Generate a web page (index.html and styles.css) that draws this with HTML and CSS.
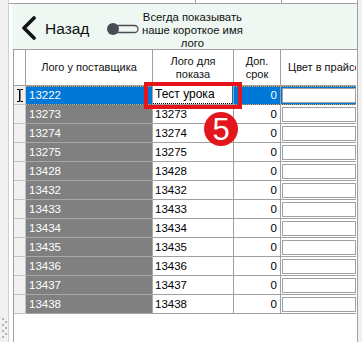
FILE: index.html
```html
<!DOCTYPE html>
<html lang="ru">
<head>
    <meta charset="UTF-8">
    <title>Лого</title>
    <link rel="stylesheet" href="styles.css">
</head>
<body>
    <div class="app">
        <!-- left splitter -->
        <div class="splitter">
            <svg class="grip" width="6" height="22" viewBox="0 0 6 22">
                <rect x="0" y="0" width="2" height="2" fill="#b4b4b4"/>
                <rect x="3" y="3" width="2" height="2" fill="#b4b4b4"/>
                <rect x="0" y="6" width="2" height="2" fill="#b4b4b4"/>
                <rect x="3" y="9" width="2" height="2" fill="#b4b4b4"/>
                <rect x="0" y="12" width="2" height="2" fill="#b4b4b4"/>
                <rect x="3" y="15" width="2" height="2" fill="#b4b4b4"/>
                <rect x="0" y="18" width="2" height="2" fill="#b4b4b4"/>
            </svg>
        </div>

        <div class="content">
            <div class="top-strip">
                <div class="strip-cell w1"></div>
                <div class="strip-cell w2"></div>
            </div>

            <!-- toolbar -->
            <div class="panel">
                <div class="back">
                    <svg width="16" height="24" viewBox="0 0 16 24">
                        <path d="M13 2 L3 12 L13 22" fill="none" stroke="#111" stroke-width="3.6" stroke-linecap="round" stroke-linejoin="round"/>
                    </svg>
                    <span class="back-text">Назад</span>
                </div>
                <svg class="toggle" width="34" height="14" viewBox="0 0 34 14">
                    <rect x="9" y="3.5" width="23" height="7" rx="3.5" fill="none" stroke="#4b4b55" stroke-width="1.3"/>
                    <circle cx="7" cy="7" r="6" fill="#4b4b55"/>
                </svg>
                <div class="toggle-label">Всегда показывать<br>наше короткое имя<br>лого</div>
            </div>

            <!-- grid -->
            <div class="grid">
                <div class="row head">
                    <div class="cell rh"></div>
                    <div class="cell">Лого у поставщика</div>
                    <div class="cell">Лого для<br>показа</div>
                    <div class="cell">Доп.<br>срок</div>
                    <div class="cell left">Цвет в прайсе</div>
                </div>
                <div id="rows"></div>
            </div>
        </div>

        <div class="edge"></div>
    </div>

    <!-- annotation -->
    <div class="mark-box"></div>
    <div class="mark-num">5</div>

    <script>
        const codes = ['13222', '13273', '13274', '13275', '13428', '13432', '13433', '13434', '13435', '13436', '13437', '13438'];
        const rows = document.getElementById('rows');

        codes.forEach((code, i) => {
            const row = document.createElement('div');
            row.className = i === 0 ? 'row data selected' : 'row data';
            const rh = i === 0
                ? '<svg width="6" height="13" viewBox="0 0 6 13"><path d="M0 0.5h2.5v12h-2.5M6 0.5h-2.5M6 12.5h-2.5M3 1v11" fill="none" stroke="#000" stroke-width="1"/></svg>'
                : '';
            const shown = i === 0 ? '<span class="editor">Тест урока</span>' : code;
            row.innerHTML = `<div class="cell rh">${rh}</div>
                <div class="cell code">${code}</div>
                <div class="cell shown">${shown}</div>
                <div class="cell num">0</div>
                <div class="cell color"><span class="color-box"></span></div>`;
            rows.appendChild(row);
        });
    </script>
</body>
</html>
```

FILE: styles.css
```css
body {
    margin: 0;
    width: 362px;
    height: 342px;
    overflow: hidden;
    position: relative;
    background: #f0f0f0;
    font-family: "Liberation Sans", Arial, sans-serif;
    font-size: 11px;
    color: #111;
}
.app {
    display: flex;
    height: 342px;
}
.splitter {
    width: 9px;
    border-right: 1px solid #d0d0d0;
    background: #f0f0f0;
    display: flex;
    flex-direction: column;
    justify-content: flex-end;
    padding-bottom: 2px;
    box-sizing: border-box;
}
.grip {
    margin-left: 2px;
}
.content {
    width: 348px;
    border-right: 1px solid #a0a0a0;
    background: #fff;
    display: flex;
    flex-direction: column;
}
.edge {
    flex: 1;
    background: #f0f0f0;
}
.top-strip {
    height: 3px;
    border-bottom: 1px solid #a0a0a0;
    display: flex;
}
.strip-cell {
    border-right: 1px solid #a0a0a0;
}
.strip-cell.w1 {
    width: 186px;
}
.strip-cell.w2 {
    width: 85px;
}
.panel {
    margin-left: 3px;
    height: 45px;
    background: #eef7f2;
    display: flex;
    align-items: center;
    padding-top: 2px;
    box-sizing: border-box;
}
.back {
    display: flex;
    align-items: center;
    margin-left: 9px;
}
.back-text {
    font-size: 15.5px;
    margin-left: 8px;
    margin-top: 2px;
    color: #111;
}
.toggle {
    margin-left: 17px;
    margin-top: 3px;
}
.toggle-label {
    width: 102px;
    margin-left: 1px;
    text-align: center;
    font-size: 11.3px;
    line-height: 13px;
    margin-top: 5px;
}
.grid {
    flex: 1;
    margin-left: 4px;
    border-left: 1px solid #a0a0a0;
    border-top: 1px solid #a0a0a0;
}
.row {
    display: grid;
    grid-template-columns: 12px 127px 81px 47px 75px;
}
.cell {
    border-right: 1px solid #a0a0a0;
    border-bottom: 1px solid #a0a0a0;
    box-sizing: border-box;
    overflow: hidden;
    white-space: nowrap;
}
.cell:last-child {
    border-right: none;
}
.head .cell {
    height: 36px;
    display: flex;
    align-items: center;
    justify-content: center;
    text-align: center;
    line-height: 13px;
}
.head .cell.left {
    justify-content: flex-start;
    padding-left: 7px;
}
.data .cell {
    height: 19px;
    line-height: 18px;
    font-size: 11.5px;
}
.data .rh {
    background: #f0f0f0;
    border-color: #c4c4c4;
    display: flex;
    align-items: center;
    justify-content: center;
}
.data .code {
    background: #808080;
    color: #fff;
    padding-left: 3px;
    border-bottom-color: #a8a8a8;
    border-right-color: #a8a8a8;
}
.data .shown {
    padding-left: 2px;
    color: #000;
}
.data .num {
    text-align: right;
    padding-right: 3px;
    color: #000;
}
.data .color {
    padding: 2px 0 0 1px;
}
.color-box {
    display: block;
    width: 72px;
    height: 13px;
    border: 1px solid #a0a0a0;
    background: #fff;
}
.selected .code,
.selected .num,
.selected .color {
    background: #0078d7;
    color: #fff;
    border-top: 1px dotted #f0a040;
    border-bottom: 1px dotted #f0a040;
    line-height: 16px;
}
.selected .color {
    padding-top: 1px;
}
.selected .shown {
    background: #0078d7;
    padding: 0 1px 0 0;
}
.editor {
    display: block;
    height: 18px;
    background: #fff;
    color: #000;
    padding-left: 2px;
    font-size: 12px;
    line-height: 17px;
    border-bottom: 1px dotted #000;
    box-sizing: border-box;
}
.mark-box {
    position: absolute;
    left: 144px;
    top: 82px;
    width: 98px;
    height: 27px;
    border: 4px solid #e8141c;
    box-sizing: border-box;
}
.mark-num {
    position: absolute;
    left: 204px;
    top: 112px;
    width: 34px;
    height: 34px;
    border-radius: 50%;
    background: #e4161d;
    color: #fff;
    font-size: 31px;
    line-height: 35px;
    text-align: center;
}
```
